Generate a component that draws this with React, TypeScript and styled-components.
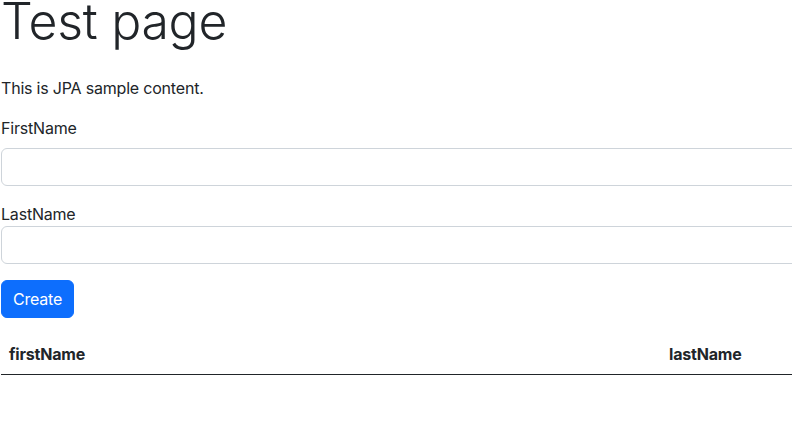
import styled, { createGlobalStyle } from 'styled-components';

const GlobalStyle = createGlobalStyle`
  html, body {
    margin: 0;
    padding: 0;
    overflow: hidden;
    background: #fff;
  }
  body {
    font-family: Inter, "Noto Sans", "Liberation Sans", sans-serif;
    font-size: 16px;
    line-height: 1.5;
    color: #212529;
  }
`;

const Page = styled.div`
  width: 1320px;
  padding-left: 1px;
`;

const Title = styled.h1`
  margin: -9px 0 25px;
  font-size: 50px;
  font-weight: 300;
  line-height: 1.2;
  letter-spacing: -0.3px;
`;

const Intro = styled.p`
  margin: 0 0 16px;
  letter-spacing: -0.2px;
`;

const Field = styled.div`
  margin-bottom: 16px;
`;

const Label = styled.label<{ $spaced?: boolean }>`
  display: block;
  margin-bottom: ${({ $spaced }) => ($spaced ? '8px' : '0')};
  letter-spacing: -0.2px;
`;

const Input = styled.input`
  display: block;
  box-sizing: border-box;
  width: 100%;
  height: 38px;
  padding: 6px 12px;
  font: inherit;
  color: #212529;
  background: #fff;
  border: 1px solid #ced4da;
  border-radius: 6px;
  outline: none;
`;

const Button = styled.button`
  display: block;
  height: 38px;
  padding: 6px 11px;
  font: inherit;
  letter-spacing: -0.2px;
  color: #fff;
  background: #0d6efd;
  border: 1px solid #0d6efd;
  border-radius: 6px;
  cursor: pointer;
`;

const Table = styled.table`
  width: 100%;
  margin-top: 16px;
  border-collapse: collapse;
  table-layout: fixed;
`;

const HeadCell = styled.th<{ $width?: number }>`
  width: ${({ $width }) => ($width ? `${$width}px` : 'auto')};
  padding: 8px;
  text-align: left;
  font-weight: 700;
  letter-spacing: -0.2px;
  border-bottom: 1px solid #212529;
`;

export default function App() {
  return (
    <>
      <GlobalStyle />
      <Page>
        <Title>Test page</Title>
        <Intro>This is JPA sample content.</Intro>
        <Field>
          <Label htmlFor="firstName" $spaced>
            FirstName
          </Label>
          <Input id="firstName" type="text" />
        </Field>
        <Field>
          <Label htmlFor="lastName">LastName</Label>
          <Input id="lastName" type="text" />
        </Field>
        <Button type="button">Create</Button>
        <Table>
          <thead>
            <tr>
              <HeadCell $width={644}>firstName</HeadCell>
              <HeadCell>lastName</HeadCell>
            </tr>
          </thead>
          <tbody />
        </Table>
      </Page>
    </>
  );
}
